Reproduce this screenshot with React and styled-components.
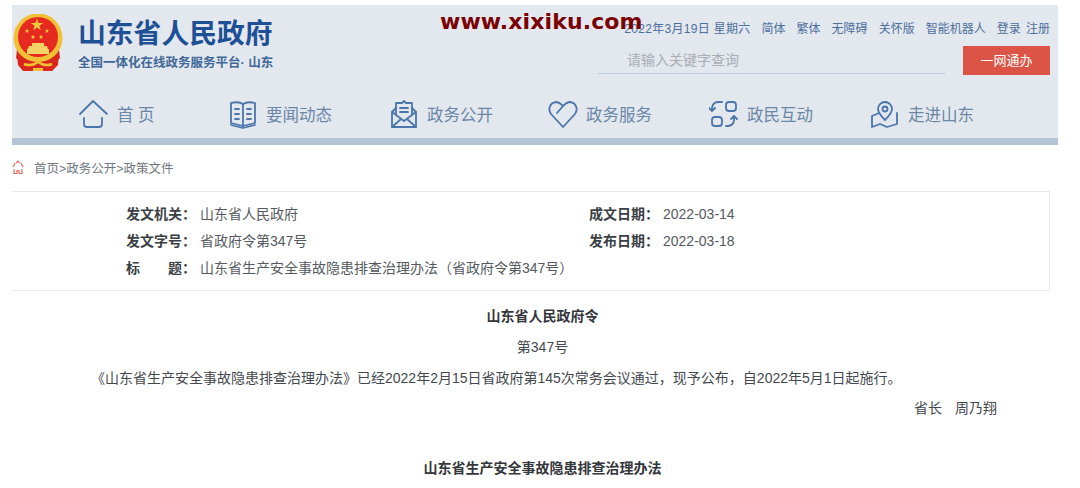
import React from 'react'
import styled, { createGlobalStyle } from 'styled-components'

const Global = createGlobalStyle`
  html, body { margin: 0; padding: 0; background: #fff; }
  body { font-family: "Liberation Sans", "Noto Sans CJK SC", sans-serif; }
`

const Page = styled.div`
  width: 1080px;
  height: 488px;
  overflow: hidden;
  position: relative;
  padding: 5px 0 0 12px;
  box-sizing: border-box;
`

const Banner = styled.header`
  width: 1046px;
  height: 140px;
  background: #e3e7ee;
  border-bottom: 7px solid #b5c5d7;
  box-sizing: border-box;
`

const TopRow = styled.div`
  display: flex;
  justify-content: space-between;
  height: 85px;
`

const Brand = styled.div`
  display: flex;
  gap: 14px;
  padding-top: 9px;
`

const BrandText = styled.div`
  padding-top: 4px;
`

const Title = styled.div`
  font-size: 27.8px;
  line-height: 32px;
  font-weight: 700;
  color: #1e5096;
  white-space: nowrap;
`

const Slogan = styled.div`
  font-size: 12.5px;
  line-height: 16px;
  margin-top: 5px;
  font-weight: 700;
  color: #3f6898;
  white-space: nowrap;
`

const Tools = styled.div`
  width: 451px;
  display: flex;
  flex-direction: column;
  align-items: flex-end;
  padding: 15px 8px 0 0;
  box-sizing: border-box;
`

const ToolLinks = styled.div`
  display: flex;
  gap: 11px;
  font-size: 12px;
  line-height: 18px;
  color: #4c6f9c;
  white-space: nowrap;
`

const DateText = styled.span`
  letter-spacing: 0.3px;
`

const Login = styled.span`
  word-spacing: 2px;
`

const SearchRow = styled.div`
  display: flex;
  gap: 18px;
  margin-top: 8px;
`

const SearchBox = styled.div`
  width: 347px;
  height: 28px;
  border-bottom: 1px solid #bccbdc;
  padding-left: 29px;
  box-sizing: border-box;
  font-size: 14px;
  line-height: 29px;
  color: #a9adb4;
`

const RedButton = styled.div`
  width: 87px;
  height: 29px;
  background: #db5445;
  color: #fff;
  font-size: 13px;
  line-height: 29px;
  text-align: center;
`

const Nav = styled.nav`
  display: flex;
  padding-left: 67px;
  height: 47px;
`

const NavItem = styled.a`
  width: ${p => p.$w}px;
  display: flex;
  align-items: center;
  gap: 8px;
  font-size: 16.5px;
  color: #6b87a8;
  white-space: nowrap;
`

const Crumbs = styled.div`
  display: flex;
  align-items: center;
  gap: 10px;
  height: 46px;
  padding-bottom: 2px;
  box-sizing: border-box;
  font-size: 12.5px;
  color: #717780;
`

const Meta = styled.section`
  width: 1038px;
  height: 100px;
  border-top: 1px solid #e8e8e8;
  border-bottom: 1px solid #e8e8e8;
  border-right: 1px solid #e8e8e8;
  box-sizing: border-box;
  display: grid;
  grid-template-columns: 463px 1fr;
  grid-auto-rows: 27px;
  padding: 9px 0 0 114px;
  font-size: 14px;
  color: #555a60;
`

const MetaCell = styled.div`
  display: flex;
  gap: 4px;
  line-height: 27px;
  white-space: nowrap;
  grid-column: ${p => (p.$full ? '1 / 3' : 'auto')};
`

const MetaLabel = styled.b`
  width: 70px;
  color: #3b3f45;
  display: flex;
  justify-content: space-between;
`

const Article = styled.article`
  width: 1038px;
  font-size: 14px;
  color: #44484e;
`

const Heading = styled.div`
  text-align: center;
  font-weight: 700;
  line-height: 20px;
  color: #33363b;
  padding-left: 23px;
  padding-top: ${p => p.$top || 0}px;
`

const Number = styled.div`
  text-align: center;
  line-height: 20px;
  padding-left: 23px;
  margin-top: 11px;
`

const Para = styled.p`
  margin: 11px 0 0;
  padding-left: 79px;
  line-height: 20px;
  white-space: nowrap;
`

const Sign = styled.div`
  text-align: right;
  padding-right: 53px;
  line-height: 20px;
  margin-top: 10px;
  word-spacing: 9px;
`

const Watermark = styled.div`
  position: absolute;
  left: 440px;
  top: 7px;
  font-family: "DejaVu Sans", sans-serif;
  font-size: 22px;
  line-height: 30px;
  font-weight: 700;
  letter-spacing: 0.1px;
  color: #7b0000;
  white-space: nowrap;
`

const Stroke = ({ children }) => (
  <svg width='30' height='30' viewBox='0 0 30 30' fill='none' stroke='#4a76ab' strokeWidth='1.8' strokeLinecap='round' strokeLinejoin='round'>
    {children}
  </svg>
)

const starPoints = '0,-5 1.2,-1.6 4.8,-1.5 1.9,0.6 2.9,4 0,2 -2.9,4 -1.9,0.6 -4.8,-1.5 -1.2,-1.6'

const Emblem = () => (
  <svg width='52' height='58' viewBox='0 0 52 58'>
    <path d='M5 40h42l-1 11-6 6H31l-5-3-5 3H11l-5-6z' fill='#d9261c' />
    <circle cx='26' cy='24' r='24.5' fill='#f1c034' />
    <circle cx='26' cy='23' r='20' fill='#e62a20' />
    <polygon points={starPoints} transform='translate(25 11) scale(1.3)' fill='#f4c93d' />
    <polygon points={starPoints} transform='translate(15 17) scale(.5)' fill='#f4c93d' />
    <polygon points={starPoints} transform='translate(35 17) scale(.5)' fill='#f4c93d' />
    <polygon points={starPoints} transform='translate(21 23) scale(.5)' fill='#f4c93d' />
    <polygon points={starPoints} transform='translate(29 23) scale(.5)' fill='#f4c93d' />
    <path d='M20 29h12v3H20zM17 32h18l1 3H16zM15 35h22v5H15z' fill='#f6d365' />
    <path d='M5 36c4 8 12 12 21 12s17-4 21-12l1 8c-5 6-13 9-22 9s-17-3-22-9z' fill='#d9261c' />
    <path d='M12 50c5 2 10 1 14-2 4 3 9 4 14 2' stroke='#f1c034' strokeWidth='2.5' fill='none' />
    <path d='M21 54h10v3H21z' fill='#f1c034' />
  </svg>
)

const navItems = [
  {
    label: '首 页',
    w: 149,
    icon: <><path d='M1 15 14 2l14 13' /><path d='M5 19v6a3 3 0 0 0 3 3h12a3 3 0 0 0 3-3v-6' /></>
  },
  {
    label: '要闻动态',
    w: 161,
    icon: <><path d='M3 4c4-1 9-1 12 1 3-2 8-2 12-1v20l-12 3-12-3z' /><path d='M3 26l12 3 12-3M15 5v22M7 10h4M7 15h4M7 20h4M19 10h4M19 15h4M19 20h4' /></>
  },
  {
    label: '政务公开',
    w: 159,
    icon: <><path d='M7 9 3 13v15h24V13l-4-4' /><path d='M7 15V4h6l2-2 2 2h6v11' /><path d='M3 13l12 9 12-9M11 9h8M11 13h8M3 28l9-8M27 28l-9-8' /></>
  },
  {
    label: '政务服务',
    w: 161,
    icon: <><path d='M15 7c-2-2-4-4-7-4C1 4 0 11 3 15l12 13 12-13c3-4 2-11-5-12-3 0-5 2-7 4l-6 7' /></>
  },
  {
    label: '政民互动',
    w: 161,
    icon: <><path d='M13 3H9a6 6 0 0 0-6 6v3M0 9l3 3 3-3' /><rect x='17' y='3' width='10' height='9' rx='3' /><rect x='3' y='18' width='10' height='9' rx='3' /><path d='M17 27h2a6 6 0 0 0 6-6v-4M22 20l3-3 3 3' /></>
  },
  {
    label: '走进山东',
    w: 161,
    icon: <><path d='M9 14 2 17v11l8-3 7 3 10-3V14' /><path d='M15 21c-4-4-7-7-7-11a7 7 0 0 1 14 0c0 4-3 7-7 11z' /><circle cx='15' cy='10' r='2.5' /></>
  }
]

const toolLinks = ['简体', '繁体', '无障碍', '关怀版', '智能机器人']

export default function App () {
  return (
    <Page>
      <Global />
      <Banner>
        <TopRow>
          <Brand>
            <Emblem />
            <BrandText>
              <Title>山东省人民政府</Title>
              <Slogan>全国一体化在线政务服务平台· 山东</Slogan>
            </BrandText>
          </Brand>
          <Tools>
            <ToolLinks>
              <DateText>2022年3月19日 星期六</DateText>
              {toolLinks.map(t => <span key={t}>{t}</span>)}
              <Login>登录 注册</Login>
            </ToolLinks>
            <SearchRow>
              <SearchBox>请输入关键字查询</SearchBox>
              <RedButton>一网通办</RedButton>
            </SearchRow>
          </Tools>
        </TopRow>
        <Nav>
          {navItems.map(item => (
            <NavItem key={item.label} $w={item.w}>
              <Stroke>{item.icon}</Stroke>
              {item.label}
            </NavItem>
          ))}
        </Nav>
      </Banner>
      <Crumbs>
        <svg width='12' height='15' viewBox='0 0 12 15' fill='none' stroke='#e0705f' strokeWidth='1.2'>
          <path d='M1 7 3 3M4 3l2-2 2 2M9 3l2 4M2 9v4.5h3v-3h2v3h3V9' />
        </svg>
        <span>首页&gt;政务公开&gt;政策文件</span>
      </Crumbs>
      <Meta>
        <MetaCell><MetaLabel>发文机关：</MetaLabel>山东省人民政府</MetaCell>
        <MetaCell><MetaLabel>成文日期：</MetaLabel>2022-03-14</MetaCell>
        <MetaCell><MetaLabel>发文字号：</MetaLabel>省政府令第347号</MetaCell>
        <MetaCell><MetaLabel>发布日期：</MetaLabel>2022-03-18</MetaCell>
        <MetaCell $full><MetaLabel><span>标</span><span>题：</span></MetaLabel>山东省生产安全事故隐患排查治理办法（省政府令第347号）</MetaCell>
      </Meta>
      <Article>
        <Heading $top={15}>山东省人民政府令</Heading>
        <Number>第347号</Number>
        <Para>《山东省生产安全事故隐患排查治理办法》已经2022年2月15日省政府第145次常务会议通过，现予公布，自2022年5月1日起施行。</Para>
        <Sign>省长 周乃翔</Sign>
        <Heading $top={40}>山东省生产安全事故隐患排查治理办法</Heading>
      </Article>
      <Watermark>www.xixiku.com</Watermark>
    </Page>
  )
}
